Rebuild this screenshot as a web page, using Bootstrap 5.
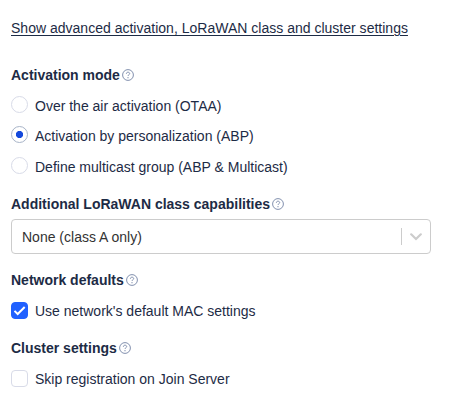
<!DOCTYPE html>
<html lang="en">
<head>
<meta charset="utf-8">
<title>Activation settings</title>
<link href="https://cdn.jsdelivr.net/npm/bootstrap@5.3.0/dist/css/bootstrap.min.css" rel="stylesheet">
<style>
body{font:14px/20px "Liberation Sans",Arial,sans-serif;color:#1d2b45;background:#fff}
.settings{width:450px;height:402px;padding:18px 19px 0 11px;overflow:hidden}
.advanced,.advanced:hover{color:inherit;text-decoration:underline;text-decoration-thickness:1px;text-underline-offset:2px;height:18px;letter-spacing:.01px}
.title{font-weight:700;height:20px;gap:2px}
.title svg{width:12px;height:12px;flex:none}
.choice{height:20px;padding:0;margin:0;min-height:0}
.choice .form-check-input{width:17px;height:17px;margin:0 7px 2px 0;float:none;border:1px solid #d8dbe8;flex:none}
.choice .form-check-input[type=radio]{margin-bottom:3px}
.choice .form-check-input[type=checkbox]{border-radius:4px}
.choice .form-check-input[type=radio]:checked{background:#fff radial-gradient(circle,#1549dc 3.2px,transparent 4px);border-color:#a8b4c8}
.choice .form-check-input[type=checkbox]:checked{background-color:#2161ff;border-color:#2161ff;background-size:17px 17px;background-position:center;background-image:url("data:image/svg+xml,%3Csvg xmlns='http://www.w3.org/2000/svg' viewBox='0 0 17 17'%3E%3Cpath d='M3.5 8.9l3.2 3.1 7-7' fill='none' stroke='white' stroke-width='2'/%3E%3C/svg%3E")}
.picker{width:420px;height:35px;border:1px solid #ccc;border-radius:4px;color:#333;margin-top:5px;padding:0 8px 0 10px;background:#fff}
.divider{width:1px;height:17px;background:#ccc;margin-right:8px}
.gap-first{margin-top:29px}
.gap-group{margin-top:17px}
.gap-title{margin-top:16px}
.gap-choice{margin-top:11px}
.gap-radio{margin-top:10px}
</style>
</head>
<body>
<svg class="d-none" xmlns="http://www.w3.org/2000/svg">
<symbol id="help" viewBox="0 0 12 12"><circle cx="6" cy="6" r="5.400" fill="none" stroke="#8290ae" stroke-width="1"/><path d="M4.4 4.800C4.400 3.700 5.100 3.200 6 3.200S7.700 3.700 7.700 4.600C7.700 5.700 6 5.800 6 7" fill="none" stroke="#8290ae" stroke-width="1"/><circle cx="6" cy="8.700" r=".65" fill="#8290ae"/></symbol>
</svg>
<main class="settings d-flex flex-column">
<a class="advanced align-self-start text-nowrap" href="#">Show advanced activation, LoRaWAN class and cluster settings</a>
<div class="title d-flex align-items-center gap-first">Activation mode<svg><use href="#help"/></svg></div>
<label class="choice form-check d-flex align-items-center gap-choice"><input class="form-check-input" type="radio" name="mode">Over the air activation (OTAA)</label>
<label class="choice form-check d-flex align-items-center gap-radio"><input class="form-check-input" type="radio" name="mode" checked>Activation by personalization (ABP)</label>
<label class="choice form-check d-flex align-items-center gap-choice"><input class="form-check-input" type="radio" name="mode">Define multicast group (ABP &amp; Multicast)</label>
<div class="title d-flex align-items-center gap-group">Additional LoRaWAN class capabilities<svg><use href="#help"/></svg></div>
<div class="picker d-flex align-items-center"><span class="flex-grow-1">None (class A only)</span><span class="divider"></span><svg width="12" height="8" viewBox="0 0 12 8"><path d="M1.200 1.300L6 6l4.800-4.700" fill="none" stroke="#ccc" stroke-width="2.200" stroke-linecap="round"/></svg></div>
<div class="title d-flex align-items-center gap-title">Network defaults<svg><use href="#help"/></svg></div>
<label class="choice form-check d-flex align-items-center gap-choice"><input class="form-check-input" type="checkbox" checked>Use network's default MAC settings</label>
<div class="title d-flex align-items-center gap-group">Cluster settings<svg><use href="#help"/></svg></div>
<label class="choice form-check d-flex align-items-center gap-choice"><input class="form-check-input" type="checkbox">Skip registration on Join Server</label>
</main>
<script src="https://cdn.jsdelivr.net/npm/bootstrap@5.3.0/dist/js/bootstrap.bundle.min.js"></script>
</body>
</html>
